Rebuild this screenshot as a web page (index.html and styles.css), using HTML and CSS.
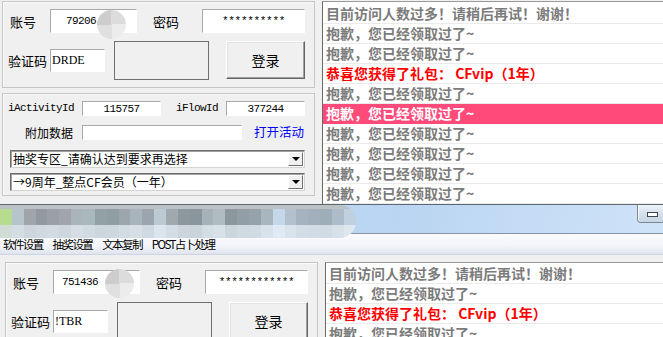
FILE: index.html
```html
<!DOCTYPE html>
<html lang="zh-CN">
<head>
    <meta charset="UTF-8">
    <meta name="viewport" content="width=device-width, initial-scale=1.0">
    <title>CF活动助手</title>
    <link rel="stylesheet" href="styles.css">
</head>
<body>
    <!-- window behind -->
    <div class="window window-back">
        <div class="client client-back">
            <div class="side">
                <div class="group login">
                    <div class="row row-account">
                        <span class="label label-login">账号</span>
                        <span class="field field-qq">
                            <span class="value value-qq-back">79206</span>
                            <span class="blur blur-back"></span>
                        </span>
                        <span class="label label-pwd">密码</span>
                        <span class="field field-pwd">**********</span>
                    </div>
                    <div class="row row-code">
                        <span class="label label-login">验证码</span>
                        <span class="field field-code">DRDE</span>
                        <div class="captcha"></div>
                        <button class="btn-login">登录</button>
                    </div>
                </div>
                <div class="group activity">
                    <div class="row row-ids">
                        <span class="label label-id">iActivityId</span>
                        <span class="field field-id">115757</span>
                        <span class="label label-flow">iFlowId</span>
                        <span class="field field-id">377244</span>
                    </div>
                    <div class="row row-extra">
                        <span class="label label-extra">附加数据</span>
                        <span class="field field-extra"></span>
                        <a class="link">打开活动</a>
                    </div>
                    <div class="combo combo-first">
                        <span class="combo-text">抽奖专区_请确认达到要求再选择</span>
                        <span class="combo-btn"><i></i></span>
                    </div>
                    <div class="combo">
                        <span class="combo-text">→9周年_整点CF会员（一年）</span>
                        <span class="combo-btn"><i></i></span>
                    </div>
                </div>
            </div>
            <div class="log log-back">
                <div class="entry">目前访问人数过多！请稍后再试！谢谢！</div>
                <div class="entry">抱歉，您已经领取过了~</div>
                <div class="entry">抱歉，您已经领取过了~</div>
                <div class="entry win">恭喜您获得了礼包： CFvip（1年）</div>
                <div class="entry">抱歉，您已经领取过了~</div>
                <div class="entry selected">抱歉，您已经领取过了~</div>
                <div class="entry">抱歉，您已经领取过了~</div>
                <div class="entry">抱歉，您已经领取过了~</div>
                <div class="entry">抱歉，您已经领取过了~</div>
                <div class="entry">抱歉，您已经领取过了~</div>
            </div>
        </div>
    </div>

    <!-- window in front -->
    <div class="window window-front">
        <div class="titlebar">
            <div class="mosaic">
                <div class="mosaic-top"></div>
                <div class="mosaic-row dark">
                    <i style="background:#b6dc8f"></i><i style="background:#b5c5cb"></i><i style="background:#9fa5ab"></i><i style="background:#929aa1"></i><i style="background:#9aa0a6"></i><i style="background:#a1a4a9"></i><i style="background:#a9b5b9"></i><i style="background:#a9b8bb"></i><i style="background:#93a1a4"></i><i style="background:#8f9ea1"></i><i style="background:#9ba7ad"></i><i style="background:#a8b4bb"></i><i style="background:#9aa5ae"></i><i style="background:#bccad3"></i><i style="background:#a0a9ae"></i><i style="background:#8c989c"></i><i style="background:#8a969b"></i><i style="background:#a6b2b9"></i><i style="background:#b0bbc2"></i><i style="background:#8a979d"></i><i style="background:#919ea6"></i><i style="background:#96a2ab"></i><i style="background:#a8b6bf"></i><i style="background:#c5d8ea"></i><i style="background:#b2c1cd"></i><i style="background:#a4b2c1"></i><i style="background:#a1b0bc"></i><i style="background:#9eadb7"></i><i style="background:#acbccb"></i><i style="background:#c0d0de"></i>
                </div>
                <div class="mosaic-row light">
                    <i style="background:#d2dcd6"></i><i style="background:#d4dde3"></i><i style="background:#cdd5dd"></i><i style="background:#d0d8e0"></i><i style="background:#d3dbe2"></i><i style="background:#cfd7de"></i><i style="background:#d6dee4"></i><i style="background:#d2dbe1"></i><i style="background:#ccd6dc"></i><i style="background:#cdd7de"></i><i style="background:#d3dce3"></i><i style="background:#d6dfe6"></i><i style="background:#cfd9e1"></i><i style="background:#dbe5ee"></i><i style="background:#d4dde4"></i><i style="background:#cbd5db"></i><i style="background:#cad4da"></i><i style="background:#d3dde4"></i><i style="background:#d8e1e8"></i><i style="background:#cbd5dc"></i><i style="background:#cfd9e0"></i><i style="background:#d1dbe3"></i><i style="background:#d7e2ea"></i><i style="background:#dfeaf5"></i><i style="background:#d8e3ec"></i><i style="background:#d2dde8"></i><i style="background:#d1dce6"></i><i style="background:#d0dbe4"></i><i style="background:#d6e1ea"></i><i style="background:#dde7f0"></i>
                </div>
            </div>
            <div class="min-btn"><i></i></div>
        </div>
        <div class="menubar">
            <span class="menu-item">软件设置</span>
            <span class="menu-item">抽奖设置</span>
            <span class="menu-item">文本复制</span>
            <span class="menu-item">POST占卜处理</span>
        </div>
        <div class="client client-front">
            <div class="side">
                <div class="group login">
                    <div class="row row-account">
                        <span class="label label-login">账号</span>
                        <span class="field field-qq">
                            <span class="value value-qq-front">751436</span>
                            <span class="blur blur-front"></span>
                        </span>
                        <span class="label label-pwd">密码</span>
                        <span class="field field-pwd">************</span>
                    </div>
                    <div class="row row-code">
                        <span class="label label-login">验证码</span>
                        <span class="field field-code">!TBR</span>
                        <div class="captcha"></div>
                        <button class="btn-login">登录</button>
                    </div>
                </div>
            </div>
            <div class="log log-front">
                <div class="entry">目前访问人数过多！请稍后再试！谢谢！</div>
                <div class="entry">抱歉，您已经领取过了~</div>
                <div class="entry win">恭喜您获得了礼包： CFvip（1年）</div>
                <div class="entry">抱歉，您已经领取过了~</div>
            </div>
        </div>
    </div>
</body>
</html>
```

FILE: styles.css
```css
* {
    box-sizing: border-box;
}
body {
    margin: 0;
    width: 663px;
    height: 337px;
    overflow: hidden;
    background: #f0f0f0;
    font-family: "Noto Sans CJK SC", "Noto Sans", sans-serif;
    font-size: 12px;
    color: #000;
}
.window-back {
    height: 204px;
    overflow: hidden;
}
.window-front {
    height: 133px;
    overflow: hidden;
}
.client {
    display: flex;
}
.client-back {
    padding: 1px 0 0 2px;
}
.client-front {
    padding: 7px 0 0 5px;
}
.side {
    width: 313px;
    flex: none;
    display: flex;
    flex-direction: column;
    gap: 5px;
}
.group {
    border: 1px solid #c6c6c6;
    box-shadow: inset 1px 1px 0 #fafafa;
    padding: 7px 8px 7px 5px;
}
.activity {
    padding-bottom: 4px;
}
.row {
    display: flex;
    align-items: center;
}
.row-account {
    height: 24px;
}
.row-code {
    height: 39px;
    margin-top: 8px;
}
.row-ids {
    height: 15px;
}
.row-extra {
    height: 15px;
    margin-top: 9px;
}
.label {
    flex: none;
    white-space: nowrap;
    line-height: 1;
}
.label-login {
    width: 42px;
    font-size: 13px;
}
.row-account .label-login {
    padding-left: 2px;
}
.label-pwd {
    width: 49px;
    margin-left: 16px;
    font-size: 13px;
}
.label-id,
.label-flow {
    font-family: "Liberation Mono", monospace;
    font-size: 11px;
    letter-spacing: -0.6px;
}
.label-id {
    width: 74px;
}
.label-flow {
    width: 50px;
    margin-left: 15px;
}
.label-extra {
    width: 74px;
    text-align: right;
    padding-right: 9px;
}

/* text boxes */
.field {
    position: relative;
    flex: none;
    display: flex;
    align-items: center;
    justify-content: center;
    height: 100%;
    background: #fff;
    border: 1px solid;
    border-color: #a8a8a8 #fff #fff #a8a8a8;
    font-family: "Liberation Mono", monospace;
    font-size: 11px;
    letter-spacing: -0.6px;
    white-space: nowrap;
}
.field-qq {
    width: 87px;
    justify-content: flex-start;
}
.value-qq-back {
    padding-left: 15px;
}
.value-qq-front {
    padding-left: 8px;
}
.field-pwd {
    width: 103px;
    letter-spacing: -0.3px;
}
.field-code {
    width: 55px;
    height: 23px;
    justify-content: flex-start;
    padding-left: 1px;
    font-family: "Liberation Serif", serif;
    font-size: 12px;
    letter-spacing: 0;
}
.field-id {
    width: 79px;
}
.field-extra {
    width: 160px;
}
.blur {
    position: absolute;
    width: 29px;
    height: 29px;
    border-radius: 50%;
    background: conic-gradient(#dcdcdc 0 25%, #ececec 0 50%, #e0e0e0 0 75%, #cdcdcd 0);
}
.blur-back {
    left: 46px;
    top: 0;
}
.blur-front {
    left: 51px;
    top: -2px;
}
.captcha {
    flex: none;
    width: 95px;
    height: 39px;
    margin-left: 9px;
    border: 1px solid #6f6f6f;
    background: #f0f0f0;
}
.btn-login {
    flex: none;
    width: 79px;
    height: 38px;
    margin-left: 17px;
    align-self: flex-start;
    background: #f0f0f0;
    border: 1px solid;
    border-color: #fff #646464 #646464 #fff;
    box-shadow: inset -1px -1px 0 #a0a0a0, inset 1px 1px 0 #e3e3e3;
    font-family: "Noto Sans CJK SC", sans-serif;
    font-size: 14px;
    padding: 0;
}
.link {
    margin-left: 12px;
    color: #0000ff;
    font-size: 12.5px;
    line-height: 1;
}

/* drop downs */
.combo {
    display: flex;
    align-items: center;
    justify-content: space-between;
    width: 295px;
    height: 18px;
    margin: 5px 0 0 2px;
    background: #fff;
    border: 1px solid;
    border-color: #6e6e6e #d4d4d4 #d4d4d4 #6e6e6e;
    box-shadow: inset 1px 1px 0 #a0a0a0;
    padding-left: 2px;
}
.combo-first {
    margin-top: 10px;
}
.combo-text {
    white-space: nowrap;
    line-height: 1;
}
.combo-btn {
    display: flex;
    align-items: center;
    justify-content: center;
    width: 15px;
    height: 14px;
    margin-right: 1px;
    background: #f0f0f0;
    border: 1px solid;
    border-color: #fff #6e6e6e #6e6e6e #fff;
}
.combo-btn i {
    width: 0;
    height: 0;
    border-left: 4px solid transparent;
    border-right: 4px solid transparent;
    border-top: 4px solid #000;
}

/* output list */
.log {
    flex: 1;
    margin-left: 7px;
    background: #fff;
    border-left: 1px solid #6a6a6a;
    border-top: 1px solid #9a9a9a;
}
.log-back {
    padding-top: 2px;
}
.log-front {
    padding-top: 1px;
}
.entry {
    height: 20px;
    line-height: 19px;
    padding-left: 3px;
    border-bottom: 1px solid #ebebeb;
    color: #7b7b7b;
    font-size: 14px;
    font-weight: bold;
    white-space: nowrap;
}
.entry.win {
    color: #ff0000;
}
.entry.selected {
    background: #ff4a7a;
    border-bottom-color: #ff4a7a;
    color: #fff;
}

/* title and menu of the front window */
.titlebar {
    position: relative;
    height: 29px;
    border-top: 1px solid #5f6870;
    background: linear-gradient(100deg, #c0d8f0, #bad5f2 60%, #cfe3f8);
    box-shadow: 0 -4px 6px rgba(0, 0, 0, 0.22);
}
.mosaic {
    position: absolute;
    left: 0;
    top: 0;
    width: 356px;
    height: 33px;
    border-radius: 0 16px 16px 0;
    overflow: hidden;
    z-index: 1;
}
.mosaic-top {
    height: 4px;
    background: #bcc1c5;
}
.mosaic-row {
    display: flex;
}
.mosaic-row i {
    flex: 1;
}
.mosaic-row.dark {
    height: 16px;
}
.mosaic-row.light {
    height: 13px;
}
.min-btn {
    position: absolute;
    left: 637px;
    top: 0;
    width: 30px;
    height: 18px;
    border: 1px solid #7d8896;
    border-top: none;
    border-radius: 0 0 0 4px;
    background: linear-gradient(#eef3f8, #d4dfeb 55%, #c6d4e4);
    box-shadow: inset 1px 0 0 #f6f9fc;
}
.min-btn i {
    position: absolute;
    left: 9px;
    top: 7px;
    width: 11px;
    height: 5px;
    background: #fff;
    border: 1px solid #3c4650;
}
.menubar {
    display: flex;
    align-items: center;
    gap: 10px;
    height: 22px;
    padding: 2px 0 0 3px;
    border-top: 1px solid #8b97a6;
    border-bottom: 1px solid #cdd4e6;
    background: linear-gradient(#fbfcfd, #f2f4f8 60%, #dfe4ee);
}
.menu-item {
    font-size: 11.5px;
    letter-spacing: -1.6px;
    line-height: 1;
    white-space: nowrap;
}
```
